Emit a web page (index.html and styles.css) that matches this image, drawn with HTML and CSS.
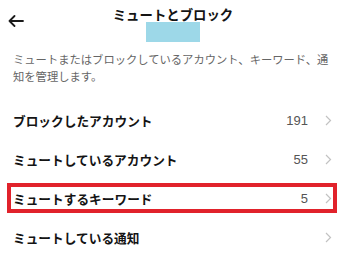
FILE: index.html
```html
<!DOCTYPE html>
<html lang="ja">
<head>
	<meta charset="UTF-8">
	<title>ミュートとブロック</title>
	<link rel="stylesheet" href="styles.css">
</head>
<body>
	<div class="header">
		<div class="back">
			<svg width="16" height="12" viewBox="0 0 16 12"><path d="M15 6H1.5M6.5 1L1.5 6l5 5" fill="none" stroke="#1a1a1a" stroke-width="1.8" stroke-linecap="round" stroke-linejoin="round"/></svg>
		</div>
		<div class="title">
			<h1>ミュートとブロック</h1>
			<div class="mask"></div>
		</div>
		<div></div>
	</div>
	<p class="desc">ミュートまたはブロックしているアカウント、キーワード、通知を管理します。</p>
	<ul class="menu">
		<li><span class="label">ブロックしたアカウント</span><span class="count">191</span><svg class="chev" width="7" height="11" viewBox="0 0 7 11"><path d="M1 1l4.5 4.5L1 10" fill="none" stroke="#c2c2c2" stroke-width="1.2"/></svg></li>
		<li><span class="label">ミュートしているアカウント</span><span class="count">55</span><svg class="chev" width="7" height="11" viewBox="0 0 7 11"><path d="M1 1l4.5 4.5L1 10" fill="none" stroke="#c2c2c2" stroke-width="1.2"/></svg></li>
		<li class="mark"><span class="label">ミュートするキーワード</span><span class="count">5</span><svg class="chev" width="7" height="11" viewBox="0 0 7 11"><path d="M1 1l4.5 4.5L1 10" fill="none" stroke="#c2c2c2" stroke-width="1.2"/></svg></li>
		<li><span class="label">ミュートしている通知</span><span class="count"></span><svg class="chev" width="7" height="11" viewBox="0 0 7 11"><path d="M1 1l4.5 4.5L1 10" fill="none" stroke="#c2c2c2" stroke-width="1.2"/></svg></li>
	</ul>
</body>
</html>
```

FILE: styles.css
```css
body{
	margin: 0;
	background: #fff;
	color: #141414;
	font-family: "Noto Sans CJK JP", "Noto Sans", sans-serif;
}
ul{
	list-style: none;
	margin: 0;
	padding: 0;
}
.header{
	display: grid;
	grid-template-columns: 1fr auto 1fr;
	padding-top: 6px;
}
.back{
	padding-left: 8px;
	padding-top: 9px;
}
.back svg{
	display: block;
}
.title{
	display: flex;
	flex-direction: column;
	align-items: center;
	padding-left: 6px;
}
.title h1{
	margin: 0;
	font-size: 13.4px;
	line-height: 16px;
	font-weight: bold;
}
.mask{
	width: 54px;
	height: 20px;
	margin-top: 0;
	background: #9dd8e8;
}
.desc{
	margin: 9px 8px 0 13px;
	font-size: 11.3px;
	line-height: 17px;
	color: #666;
}
.menu{
	margin-top: 16px;
}
.menu li{
	position: relative;
	display: flex;
	align-items: center;
	height: 39px;
	padding: 0 8px 0 13px;
}
.label{
	flex: 1;
	font-size: 12.7px;
	font-weight: bold;
}
.count{
	font-family: "Liberation Sans", sans-serif;
	font-size: 13px;
	color: #555;
	margin-right: 17px;
}
.chev{
	display: block;
}
.mark::after{
	content: "";
	position: absolute;
	top: 4px;
	bottom: 5px;
	left: 7px;
	right: 3px;
	border: 4px solid #e1222b;
}
```
